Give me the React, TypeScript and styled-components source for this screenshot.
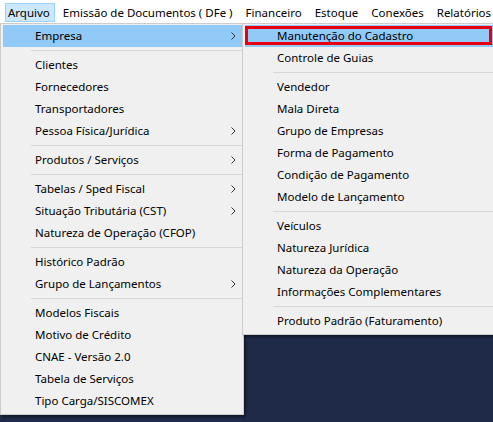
import styled, { createGlobalStyle } from "styled-components";

const GlobalStyle = createGlobalStyle`
  html, body {
    margin: 0;
    padding: 0;
  }
  body {
    background: #1f2a48;
    font-family: "Noto Sans", "Segoe UI", sans-serif;
    font-size: 11.5px;
    color: #000;
    overflow: hidden;
  }
`;

const Screen = styled.div`
  width: 493px;
  height: 422px;
  overflow: hidden;
  background: #1f2a48;
`;

const MenuBar = styled.nav`
  display: flex;
  align-items: flex-start;
  gap: 5px;
  height: 23px;
  box-sizing: border-box;
  padding: 3px 0 0 5px;
  background: #fff;
`;

const BarItem = styled.div<{ $open?: boolean }>`
  height: 19px;
  box-sizing: border-box;
  padding: 0 4px 0 2px;
  line-height: 17px;
  white-space: nowrap;
  border: 1px solid ${(p) => (p.$open ? "#99d1ff" : "transparent")};
  background: ${(p) => (p.$open ? "#cce8ff" : "transparent")};
`;

const Dropdowns = styled.div`
  display: flex;
  align-items: flex-start;
`;

const Menu = styled.div<{ $width: number; $overlap?: number }>`
  width: ${(p) => p.$width}px;
  margin-left: ${(p) => -(p.$overlap ?? 0)}px;
  box-sizing: border-box;
  padding: 1px 1px 2px 2px;
  background: #f0f0f0;
  border: 1px solid #cccccc;
  box-shadow: 2px 2px 2px rgba(0, 0, 0, 0.4);
  flex-shrink: 0;
`;

const Item = styled.div<{ $active?: boolean; $marked?: boolean }>`
  position: relative;
  display: flex;
  align-items: center;
  justify-content: space-between;
  height: 22px;
  padding: 0 6px 1px 32px;
  box-sizing: border-box;
  white-space: nowrap;
  background: ${(p) => (p.$active ? "#91c9f7" : "transparent")};

  ${(p) =>
    p.$marked &&
    `
    &::after {
      content: "";
      position: absolute;
      top: 1px;
      left: 0;
      right: 1px;
      bottom: 2px;
      border: 3px solid #e60012;
    }
  `}
`;

const Separator = styled.div`
  height: 1px;
  margin: 3px 0 3px 28px;
  background: #d7d7d7;
`;

const Chevron = () => (
  <svg width="5" height="8" viewBox="0 0 5 8">
    <polyline points="0.5,0.5 4,4 0.5,7.5" fill="none" stroke="#333" strokeWidth="1" />
  </svg>
);

type Entry = { label: string; sub?: boolean; active?: boolean; marked?: boolean } | "-";

const mainMenu: Entry[] = [
  { label: "Empresa", sub: true, active: true },
  "-",
  { label: "Clientes" },
  { label: "Fornecedores" },
  { label: "Transportadores" },
  { label: "Pessoa Física/Jurídica", sub: true },
  "-",
  { label: "Produtos / Serviços", sub: true },
  "-",
  { label: "Tabelas / Sped Fiscal", sub: true },
  { label: "Situação Tributária (CST)", sub: true },
  { label: "Natureza de Operação (CFOP)" },
  "-",
  { label: "Histórico Padrão" },
  { label: "Grupo de Lançamentos", sub: true },
  "-",
  { label: "Modelos Fiscais" },
  { label: "Motivo de Crédito" },
  { label: "CNAE - Versão 2.0" },
  { label: "Tabela de Serviços" },
  { label: "Tipo Carga/SISCOMEX" },
];

const empresaMenu: Entry[] = [
  { label: "Manutenção do Cadastro", active: true, marked: true },
  { label: "Controle de Guias" },
  "-",
  { label: "Vendedor" },
  { label: "Mala Direta" },
  { label: "Grupo de Empresas" },
  { label: "Forma de Pagamento" },
  { label: "Condição de Pagamento" },
  { label: "Modelo de Lançamento" },
  "-",
  { label: "Veículos" },
  { label: "Natureza Jurídica" },
  { label: "Natureza da Operação" },
  { label: "Informações Complementares" },
  "-",
  { label: "Produto Padrão (Faturamento)" },
];

const topItems = ["Arquivo", "Emissão de Documentos ( DFe )", "Financeiro", "Estoque", "Conexões", "Relatórios"];

const renderEntries = (entries: Entry[]) =>
  entries.map((e, i) =>
    e === "-" ? (
      <Separator key={i} />
    ) : (
      <Item key={i} $active={e.active} $marked={e.marked}>
        <span>{e.label}</span>
        {e.sub && <Chevron />}
      </Item>
    )
  );

export default function App() {
  return (
    <Screen>
      <GlobalStyle />
      <MenuBar>
        {topItems.map((t, i) => (
          <BarItem key={t} $open={i === 0}>
            {t}
          </BarItem>
        ))}
      </MenuBar>
      <Dropdowns>
        <Menu $width={244}>{renderEntries(mainMenu)}</Menu>
        <Menu $width={253} $overlap={2}>
          {renderEntries(empresaMenu)}
        </Menu>
      </Dropdowns>
    </Screen>
  );
}
